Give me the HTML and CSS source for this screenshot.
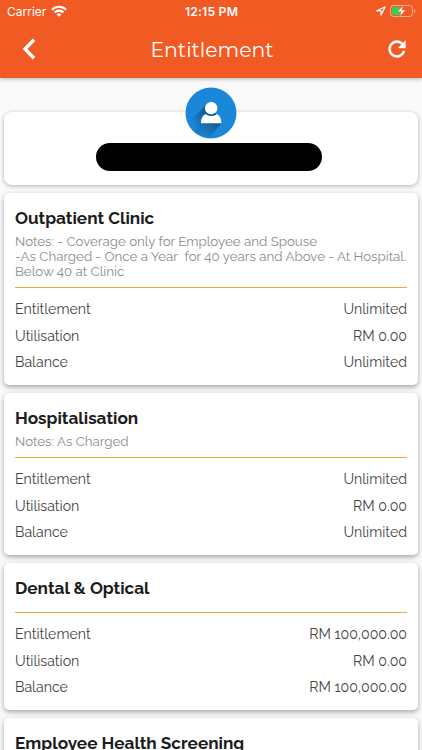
FILE: index.html
```html
<!DOCTYPE html>
<html lang="en">
<head>
	<meta charset="UTF-8">
	<meta name="viewport" content="width=device-width, initial-scale=1">
	<title>Entitlement</title>
	<link rel="stylesheet" href="styles.css">
</head>
<body>
	<header class="header">
		<div class="status">
			<div class="carrier">
				<span>Carrier</span>
				<svg width="16" height="12" viewBox="0 0 16 12" fill="none" stroke="#fff" stroke-width="2.2">
					<path d="M1 4.6a10 10 0 0 1 14 0M3.6 7.5a6.2 6.2 0 0 1 8.8 0"/>
					<path d="M8 11.8L5.6 9.4a3.4 3.4 0 0 1 4.8 0z" fill="#fff" stroke="none"/>
				</svg>
			</div>
			<span class="time">12:15 PM</span>
			<div class="battery">
				<svg width="10" height="10" viewBox="0 0 10 10" fill="none" stroke="#fff" stroke-width="1.2" stroke-linejoin="round">
					<path d="M9.200 .8L.8 4.8h4.2V9.200z"/>
				</svg>
				<svg width="26" height="12" viewBox="0 0 26 12">
					<rect x=".5" y=".5" width="22" height="11" rx="3" fill="none" stroke="#fff" stroke-opacity=".5"/>
					<path d="M24 4v4c1.8-.6 1.8-3.4 0-4z" fill="#fff" fill-opacity=".5"/>
					<rect x="2" y="2" width="9.5" height="8" rx="1.5" fill="#34d058"/>
					<path d="M13.200 .6L7.200 6.800h3.7L9.700 11.400l6.300-6.400h-4z" fill="#fff" stroke="#f15a22" stroke-width=".6"/>
				</svg>
			</div>
		</div>
		<div class="navbar">
			<svg class="back" width="14" height="22" viewBox="0 0 14 22" fill="none" stroke="#fff" stroke-width="3.4">
				<path d="M12 1.700L3 11l9 9.300"/>
			</svg>
			<h1>Entitlement</h1>
			<svg class="refresh" width="18" height="18" viewBox="-.5 -.5 17 17" fill="#fff" stroke="#fff" stroke-width=".4">
				<path d="M13.65 2.35A8 8 0 1 0 15.73 10h-2.08A6 6 0 1 1 8 2c1.66 0 3.14.69 4.22 1.78L9 7h7V0z"/>
			</svg>
		</div>
	</header>

	<main>
		<section class="profile">
			<svg class="avatar" width="52" height="52" viewBox="0 0 52 52">
				<defs>
					<linearGradient id="shade" gradientUnits="userSpaceOnUse" x1="26" y1="24" x2="11" y2="39">
						<stop offset="0" stop-color="#124f86"/>
						<stop offset="1" stop-color="#1b83d2"/>
					</linearGradient>
					<linearGradient id="shade2" gradientUnits="userSpaceOnUse" x1="29" y1="33" x2="19" y2="47">
						<stop offset="0" stop-color="#14598f"/>
						<stop offset="1" stop-color="#1b7dc8"/>
					</linearGradient>
				</defs>
				<circle cx="26" cy="26" r="25.5" fill="#1b87d9"/>
				<path d="M22 17L4.500 34.500L16 46L32 28z" fill="url(#shade)"/>
				<path d="M16 36L8.500 43.500Q15 50 24 51L36.300 36z" fill="url(#shade2)"/>
				<circle cx="26.200" cy="21.200" r="6.200" fill="#fff"/>
				<path d="M16 36.200c0-5 2-8 4.800-9.200 3 2.700 7.800 2.700 10.800 0 2.800 1.200 4.800 4.200 4.800 9.200z" fill="#fff"/>
			</svg>
			<div class="name"></div>
		</section>

		<section class="card">
			<h2>Outpatient Clinic</h2>
			<p class="notes">Notes: - Coverage only for Employee and Spouse
-As Charged - Once a Year  for 40 years and Above - At Hospital.
Below 40 at Clinic</p>
			<div class="rows">
				<div class="row"><span>Entitlement</span><span>Unlimited</span></div>
				<div class="row"><span>Utilisation</span><span>RM 0.00</span></div>
				<div class="row"><span>Balance</span><span>Unlimited</span></div>
			</div>
		</section>

		<section class="card">
			<h2>Hospitalisation</h2>
			<p class="notes">Notes: As Charged</p>
			<div class="rows">
				<div class="row"><span>Entitlement</span><span>Unlimited</span></div>
				<div class="row"><span>Utilisation</span><span>RM 0.00</span></div>
				<div class="row"><span>Balance</span><span>Unlimited</span></div>
			</div>
		</section>

		<section class="card">
			<h2>Dental &amp; Optical</h2>
			<p class="notes"></p>
			<div class="rows">
				<div class="row"><span>Entitlement</span><span>RM 100,000.00</span></div>
				<div class="row"><span>Utilisation</span><span>RM 0.00</span></div>
				<div class="row"><span>Balance</span><span>RM 100,000.00</span></div>
			</div>
		</section>

		<section class="card">
			<h2>Employee Health Screening</h2>
		</section>
	</main>
</body>
</html>
```

FILE: styles.css
```css
*{
	box-sizing:border-box;
}
body{
	margin:0;
	height:750px;
	overflow:hidden;
	background-color:#fafafa;
	font-family:Raleway, Lato, sans-serif;
	color:#444;
}
h1, h2, p{
	margin:0;
}
svg{
	display:block;
}
.header{
	position:relative;
	height:78px;
	background-color:#f15a22;
	color:#fff;
	box-shadow:0 1px 4px rgba(0,0,0,.3);
}
.status{
	display:grid;
	grid-template-columns:1fr auto 1fr;
	align-items:center;
	height:22px;
	padding:0 6px 0 7px;
	font-family:Inter, sans-serif;
	font-size:12px;
}
.carrier, .battery{
	display:flex;
	align-items:center;
	gap:5px;
}
.battery{
	justify-content:flex-end;
	gap:4px;
}
.time{
	font-weight:600;
	font-size:12.2px;
	letter-spacing:.2px;
}
.navbar{
	display:flex;
	align-items:center;
	justify-content:space-between;
	height:54px;
	padding:0 16px 0 22px;
}
.navbar h1{
	font-family:Montserrat, Lato, sans-serif;
	font-size:20.4px;
	font-weight:400;
}
.profile{
	position:relative;
	height:73px;
	margin:34px 4px 0;
	padding:31px 0 0 92px;
	background-color:#fff;
	border-radius:8px;
	box-shadow:0 1px 4px rgba(0,0,0,.3);
}
/* sits over the top edge of the profile card */
.avatar{
	position:absolute;
	top:-25px;
	left:181px;
}
.name{
	width:226px;
	height:28px;
	background-color:#000;
	border-radius:14px;
}
.card{
	margin:8px 4px 0;
	padding:13px 11px 9.5px;
	background-color:#fff;
	border-radius:5px;
	box-shadow:0 2px 5px rgba(0,0,0,.35);
}
.card h2{
	height:24px;
	font-size:17.2px;
	line-height:24px;
	font-weight:700;
	color:#1c1c1c;
}
.notes{
	margin:4px 0 8px;
	font-size:13.3px;
	line-height:15px;
	color:#8c8c8c;
	white-space:pre;
}
.rows{
	padding-top:8px;
	border-top:1px solid #efaa35;
}
/* no notes: keep the gap above the divider */
.notes:empty{
	margin:0;
	height:12px;
}
.row{
	display:flex;
	justify-content:space-between;
	height:26.5px;
	font-size:14.15px;
	line-height:26.5px;
}
```
